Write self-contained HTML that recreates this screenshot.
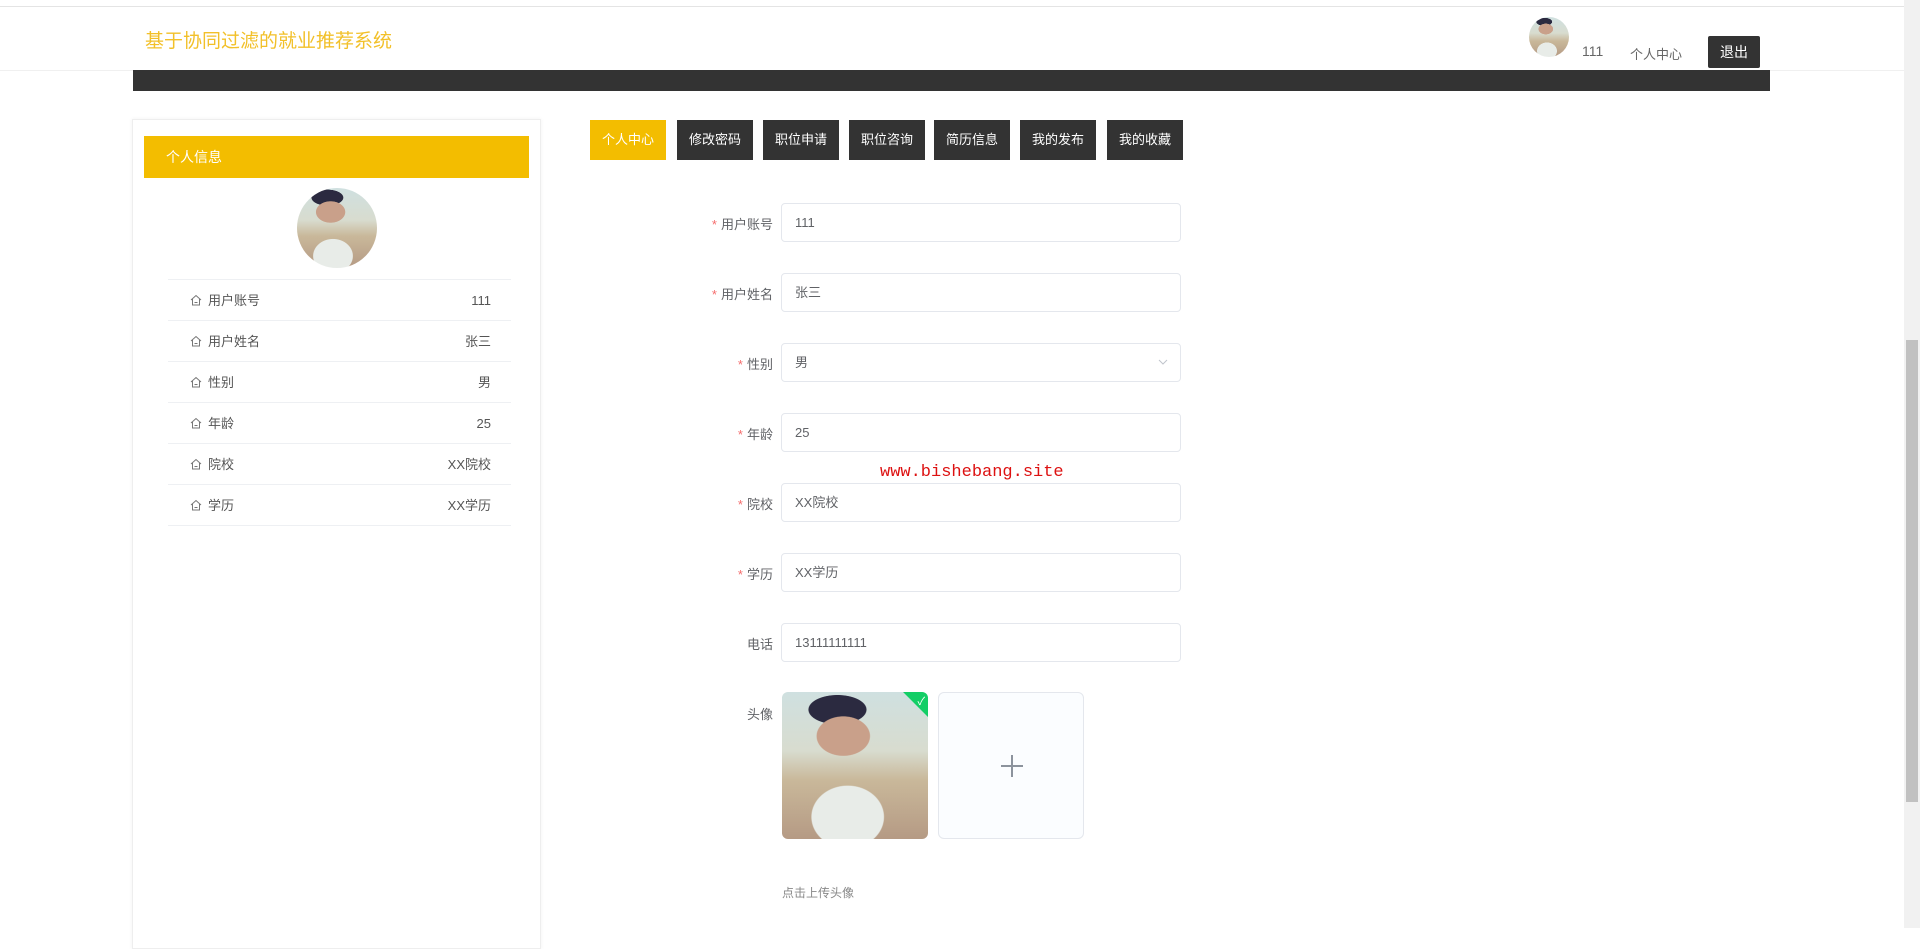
<!DOCTYPE html>
<html><head><meta charset="utf-8"><style>
*{box-sizing:border-box;margin:0;padding:0}
body{width:1920px;height:928px;overflow:hidden;background:#fff;font-family:"Liberation Sans","Noto Sans CJK SC",sans-serif;position:relative;color:#606266}
.a{position:absolute}
.photo{background:radial-gradient(ellipse 30% 22% at 42% 30%,#c9a08a 60%,transparent 62%),radial-gradient(ellipse 28% 14% at 38% 12%,#2b2a40 70%,transparent 72%),radial-gradient(ellipse 35% 30% at 45% 85%,#e8ece8 70%,transparent 72%),linear-gradient(180deg,#cfe0e0 0%,#d8dccf 40%,#c9b89a 60%,#b59a84 100%)}
.row{position:absolute;left:168px;width:343px;height:41px;border-bottom:1px solid #eef0f3;font-size:13px;color:#555;line-height:41px}
.row span.v{position:absolute;right:20px}
.row i{display:inline-block;width:12px;height:12px;margin:0 6px 0 22px;vertical-align:-1px}
.tab{position:absolute;top:120px;height:40px;width:76px;background:#333;color:#fff;font-size:13px;line-height:40px;text-align:center}
.lbl{position:absolute;right:1147px;font-size:13px;color:#606266;text-align:right}
.lbl b{color:#f56c6c;font-weight:normal;margin-right:4px}
.inp{position:absolute;left:781px;width:400px;height:39px;border:1px solid #e4e7ed;border-radius:4px;font-size:13px;color:#606266;padding-left:13px;line-height:37px}
</style></head><body>
<div class="a" style="left:0;top:6px;width:1904px;height:1px;background:#e4e4e4"></div>
<div class="a" style="left:0;top:70px;width:1904px;height:1px;background:#f0f0f0"></div>
<div class="a" style="left:145px;top:26px;font-size:19px;color:#f2c029">基于协同过滤的就业推荐系统</div>
<div class="a" style="left:133px;top:70px;width:1637px;height:21px;background:#333"></div>
<div class="a photo" style="left:1529px;top:17px;width:40px;height:40px;border-radius:50%"></div>
<div class="a" style="left:1582px;top:43px;font-size:14px;color:#666">111</div>
<div class="a" style="left:1630px;top:44px;font-size:13px;color:#666">个人中心</div>
<div class="a" style="left:1708px;top:36px;width:52px;height:32px;background:#333;color:#fff;font-size:14px;line-height:32px;text-align:center;border-radius:2px">退出</div>
<div class="a" style="left:1904px;top:0;width:16px;height:928px;background:#f1f1f1"></div>
<div class="a" style="left:1906px;top:340px;width:12px;height:462px;background:#c1c1c1"></div>

<div class="a" style="left:132px;top:119px;width:409px;height:830px;border:1px solid #eee;box-shadow:0 0 4px rgba(0,0,0,.06)"></div>
<div class="a" style="left:144px;top:136px;width:385px;height:42px;background:#f3bd00;color:#fff;font-size:14px;line-height:42px;padding-left:22px">个人信息</div>
<div class="a photo" style="left:297px;top:188px;width:80px;height:80px;border-radius:50%"></div>
<div class="a" style="left:168px;top:279px;width:343px;height:1px;background:#eef0f3"></div>
<div class="row" style="top:280px"><i><svg width="12" height="12" viewBox="0 0 12 12" fill="none" stroke="#777"><path d="M1 6L6 1.5L11 6M2.5 5V11H9.5V5M4.5 8.5H7.5"/></svg></i>用户账号<span class="v">111</span></div>
<div class="row" style="top:321px"><i><svg width="12" height="12" viewBox="0 0 12 12" fill="none" stroke="#777"><path d="M1 6L6 1.5L11 6M2.5 5V11H9.5V5M4.5 8.5H7.5"/></svg></i>用户姓名<span class="v">张三</span></div>
<div class="row" style="top:362px"><i><svg width="12" height="12" viewBox="0 0 12 12" fill="none" stroke="#777"><path d="M1 6L6 1.5L11 6M2.5 5V11H9.5V5M4.5 8.5H7.5"/></svg></i>性别<span class="v">男</span></div>
<div class="row" style="top:403px"><i><svg width="12" height="12" viewBox="0 0 12 12" fill="none" stroke="#777"><path d="M1 6L6 1.5L11 6M2.5 5V11H9.5V5M4.5 8.5H7.5"/></svg></i>年龄<span class="v">25</span></div>
<div class="row" style="top:444px"><i><svg width="12" height="12" viewBox="0 0 12 12" fill="none" stroke="#777"><path d="M1 6L6 1.5L11 6M2.5 5V11H9.5V5M4.5 8.5H7.5"/></svg></i>院校<span class="v">XX院校</span></div>
<div class="row" style="top:485px"><i><svg width="12" height="12" viewBox="0 0 12 12" fill="none" stroke="#777"><path d="M1 6L6 1.5L11 6M2.5 5V11H9.5V5M4.5 8.5H7.5"/></svg></i>学历<span class="v">XX学历</span></div>

<div class="tab" style="left:590px;background:#f3bd00">个人中心</div>
<div class="tab" style="left:677px">修改密码</div>
<div class="tab" style="left:763px">职位申请</div>
<div class="tab" style="left:849px">职位咨询</div>
<div class="tab" style="left:934px">简历信息</div>
<div class="tab" style="left:1020px">我的发布</div>
<div class="tab" style="left:1107px">我的收藏</div>

<div class="lbl" style="top:214px"><b>*</b>用户账号</div><div class="inp" style="top:203px">111</div>
<div class="lbl" style="top:284px"><b>*</b>用户姓名</div><div class="inp" style="top:273px">张三</div>
<div class="lbl" style="top:354px"><b>*</b>性别</div><div class="inp" style="top:343px">男<svg style="position:absolute;right:12px;top:15px" width="10" height="6" viewBox="0 0 10 6" fill="none" stroke="#c0c4cc"><path d="M1 1L5 5L9 1"/></svg></div>
<div class="lbl" style="top:424px"><b>*</b>年龄</div><div class="inp" style="top:413px">25</div>
<div class="lbl" style="top:494px"><b>*</b>院校</div><div class="inp" style="top:483px">XX院校</div>
<div class="lbl" style="top:564px"><b>*</b>学历</div><div class="inp" style="top:553px">XX学历</div>
<div class="lbl" style="top:634px">电话</div><div class="inp" style="top:623px">13111111111</div>
<div class="a" style="left:880px;top:463px;font-family:'Liberation Mono',monospace;font-size:17px;color:#d11">www.bishebang.site</div>
<div class="lbl" style="top:704px">头像</div>
<div class="a photo" style="left:782px;top:692px;width:146px;height:147px;border-radius:6px;overflow:hidden"><div class="a" style="right:-17px;top:-7px;width:40px;height:24px;background:#13ce66;transform:rotate(45deg)"></div><div class="a" style="right:3px;top:1px;color:#fff;font-size:11px">✓</div></div>
<div class="a" style="left:938px;top:692px;width:146px;height:147px;border:1px solid #e4e7ed;border-radius:6px;background:#fbfdff"><div class="a" style="left:62px;top:72px;width:22px;height:2px;background:#8c939d"></div><div class="a" style="left:72px;top:62px;width:2px;height:22px;background:#8c939d"></div></div>
<div class="a" style="left:782px;top:884px;font-size:12px;color:#888">点击上传头像</div>
</body></html>
